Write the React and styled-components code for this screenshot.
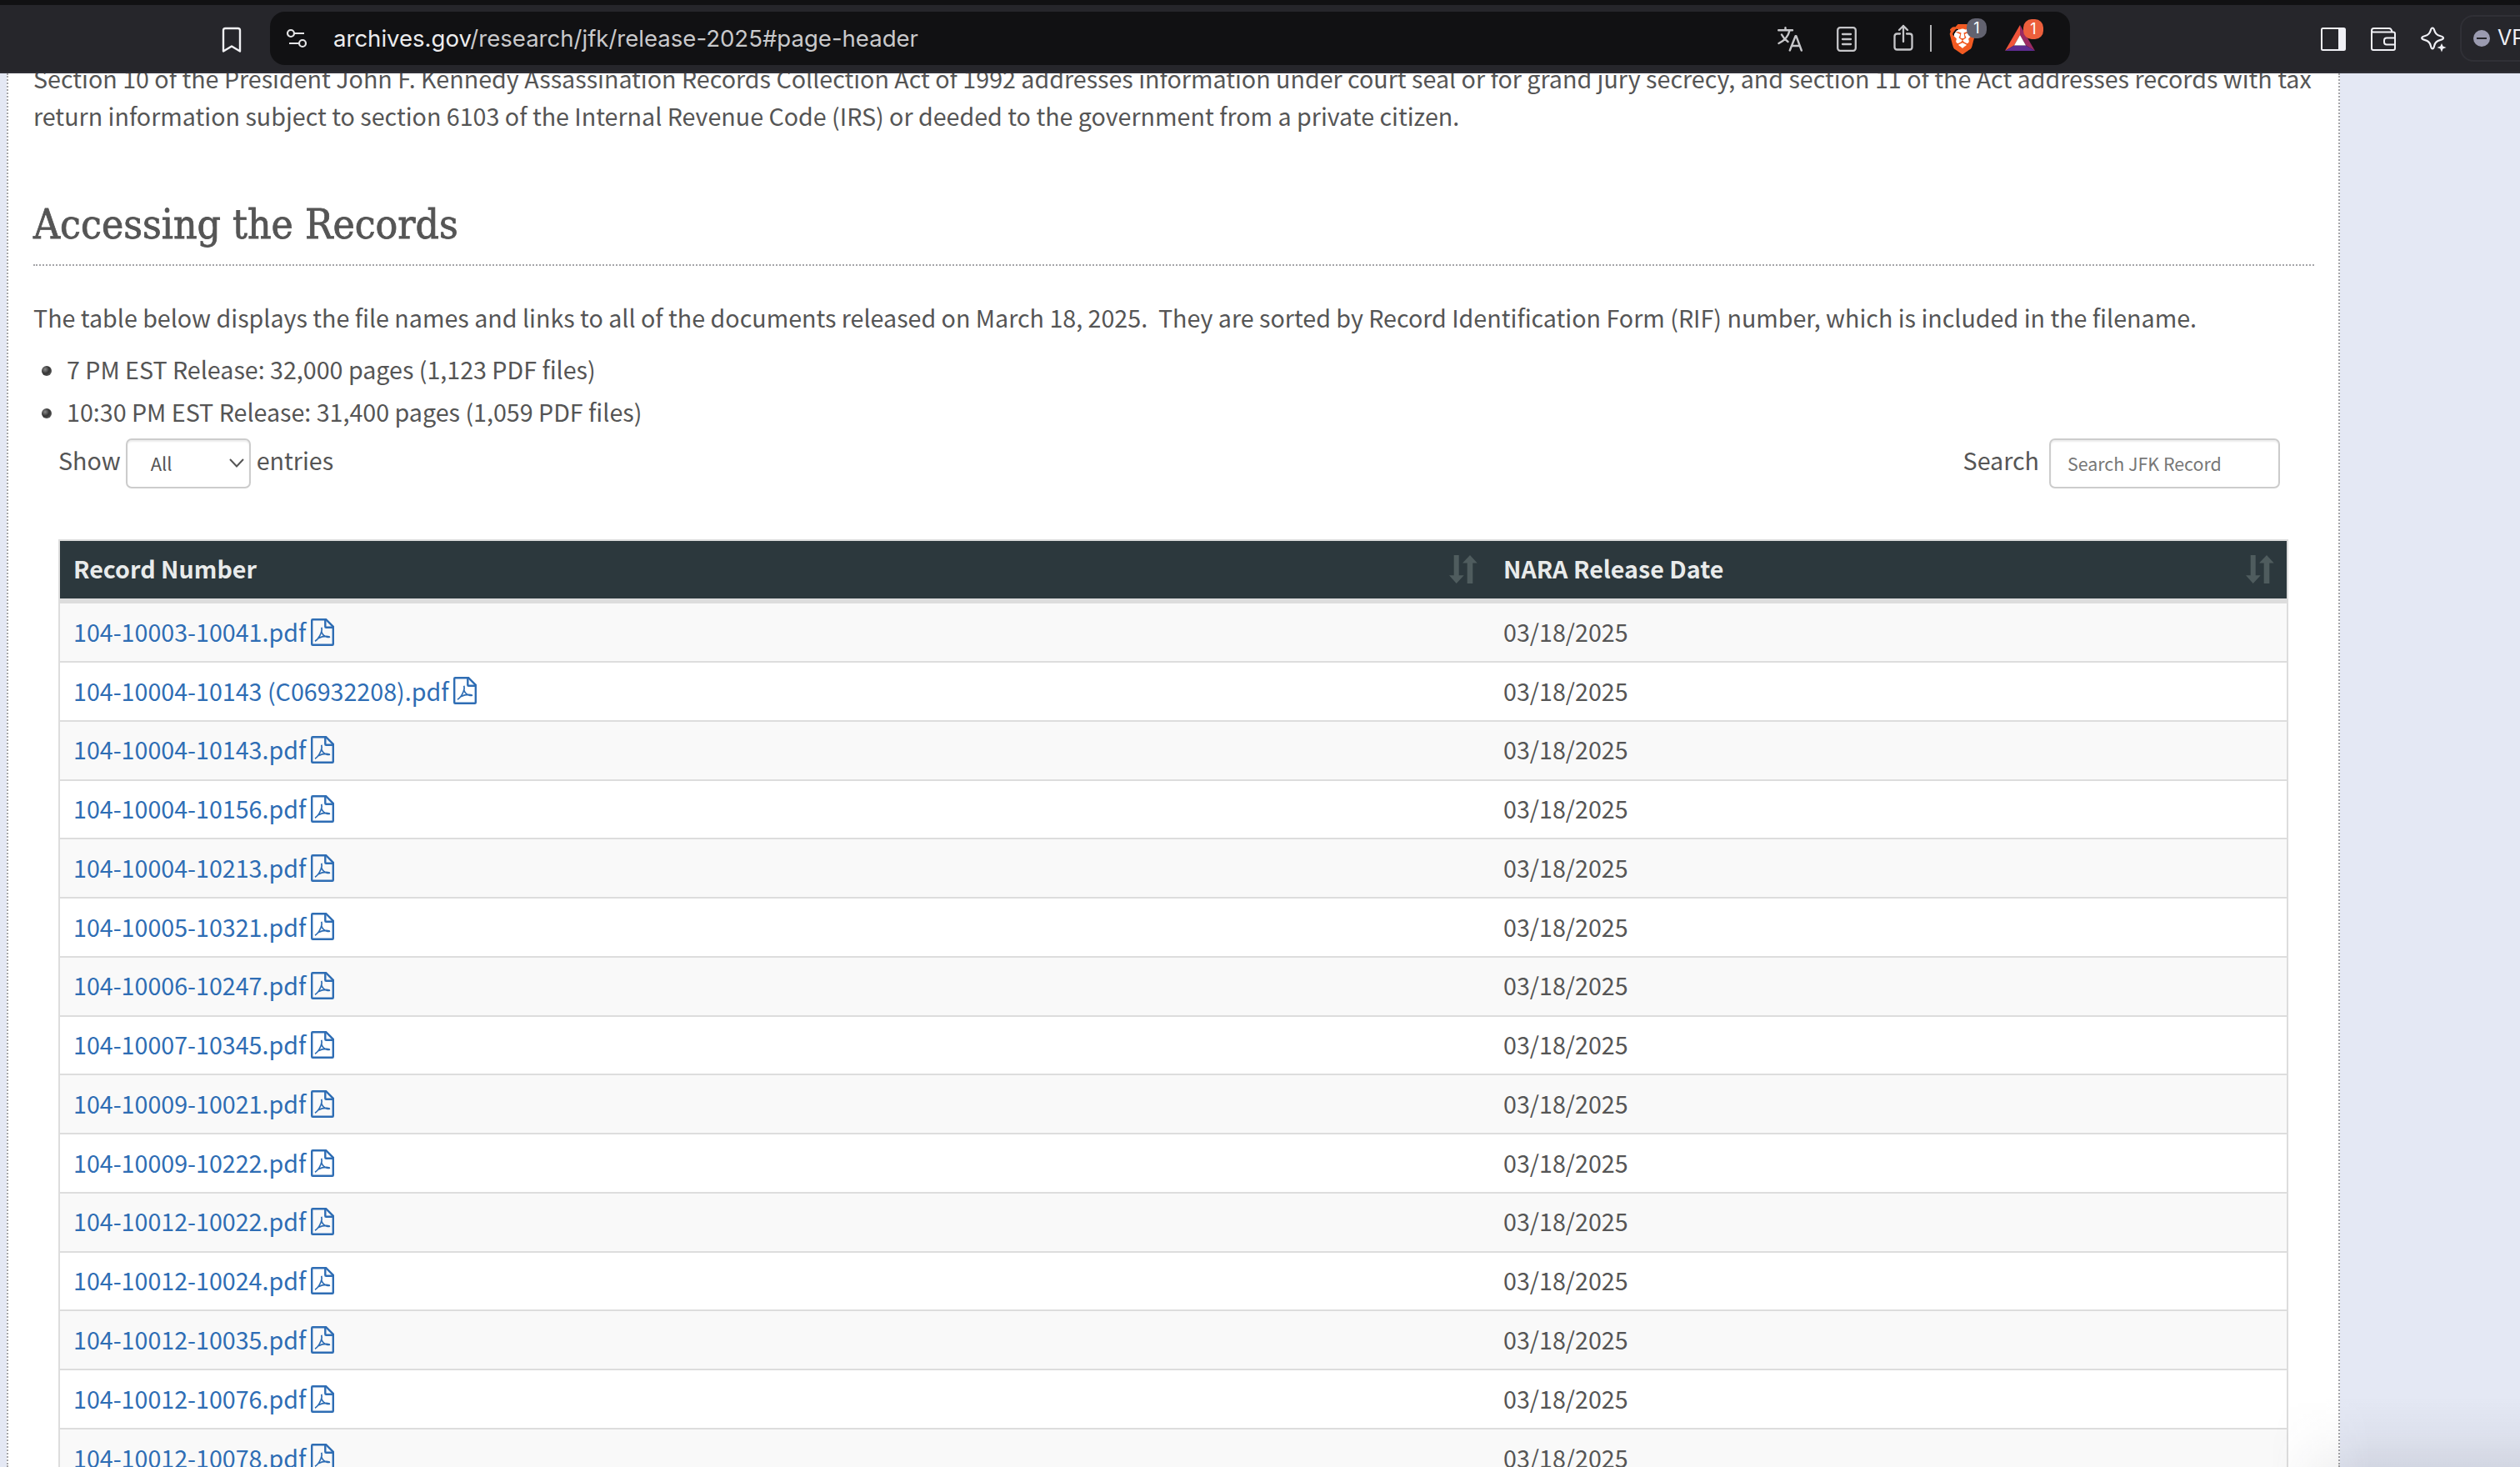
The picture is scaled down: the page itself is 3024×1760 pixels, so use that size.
import React from 'react';
import styled, { createGlobalStyle } from 'styled-components';
import { SiBrave } from 'react-icons/si';

const GlobalStyle = createGlobalStyle`
  * {
    box-sizing: border-box;
  }
  body {
    margin: 0;
    background: #e4e8f4;
    overflow: hidden;
  }
`;

const records = [
  '104-10003-10041.pdf',
  '104-10004-10143 (C06932208).pdf',
  '104-10004-10143.pdf',
  '104-10004-10156.pdf',
  '104-10004-10213.pdf',
  '104-10005-10321.pdf',
  '104-10006-10247.pdf',
  '104-10007-10345.pdf',
  '104-10009-10021.pdf',
  '104-10009-10222.pdf',
  '104-10012-10022.pdf',
  '104-10012-10024.pdf',
  '104-10012-10035.pdf',
  '104-10012-10076.pdf',
  '104-10012-10078.pdf',
];

function PdfIcon() {
  return (
    <svg width="28" height="33" viewBox="0 0 28 33" fill="none" stroke="currentColor" strokeWidth="2.4">
      <path d="M1.2 2.2q0-1 1-1H18.2L26.8 9.8V30.8q0 1-1 1H2.2q-1 0-1-1Z" />
      <path d="M17.3 1.5V9.7q0 1 1 1H26.6" />
      <path
        d="M5 27.2c3-1.6 5.6-5.7 7.2-9.7 1-2.6 1.2-5 .6-6.8M12.8 16c1 2.8 3.4 5.6 6.4 6.2 1.6.3 2.8.2 3.8-.3M9 23.6c4-1.8 9.6-2.6 13.8-1.6"
        strokeWidth="1.7"
      />
    </svg>
  );
}

function SortIcon() {
  return (
    <svg width="34" height="34" viewBox="0 0 34 34" fill="#4f5c5e">
      <path d="M5.7 0h6v24.3h6L8.7 34 0 24.3h5.7Z" />
      <path d="M25 0l8.7 9.5h-5.4V34h-6.6V9.5H16Z" />
    </svg>
  );
}

function BookmarkIcon() {
  return (
    <svg width="24" height="32" viewBox="0 0 24 32" fill="none" stroke="#f0f0f3" strokeWidth="2.4" strokeLinejoin="round">
      <path d="M2 4.5Q2 2 4.5 2h15Q22 2 22 4.5V29.5L12 23.5 2 29.5Z" />
    </svg>
  );
}

function TuneIcon() {
  return (
    <svg width="24" height="24" viewBox="0 0 24 24" fill="none" stroke="#e4e4e6" strokeWidth="2.2">
      <circle cx="5" cy="6" r="4" />
      <path d="M9 6h12M3 18h12" />
      <circle cx="19" cy="18" r="4" />
    </svg>
  );
}

function TranslateIcon() {
  return (
    <svg
      width="30"
      height="30"
      viewBox="0 0 30 30"
      fill="none"
      stroke="#c6c6c9"
      strokeWidth="2.4"
      strokeLinecap="round"
      strokeLinejoin="round"
    >
      <path d="M1.2 4.2H18M9.5 1.2v3M14.6 4.5C13 11 8 17 1.5 20M5 9.5C7 13.5 9.5 16 12.5 18" />
      <path d="M14.8 28.5 21.6 11.2h.8L28.8 28.5M17.2 23H26.5" />
    </svg>
  );
}

function ReaderIcon() {
  return (
    <svg width="24" height="30" viewBox="0 0 24 30" fill="none" stroke="#c6c6c9" strokeWidth="2.3" strokeLinecap="round">
      <rect x="1.2" y="1.2" width="21.6" height="27.6" rx="3" />
      <path d="M7 9h10M7 15h10M7 21h10" />
    </svg>
  );
}

function ShareIcon() {
  return (
    <svg
      width="24"
      height="32"
      viewBox="0 0 24 32"
      fill="none"
      stroke="#c6c6c9"
      strokeWidth="2.3"
      strokeLinecap="round"
      strokeLinejoin="round"
    >
      <path d="M8 11.5H4.5Q1.5 11.5 1.5 14.5V27.5Q1.5 30.5 4.5 30.5H19.5Q22.5 30.5 22.5 27.5V14.5Q22.5 11.5 19.5 11.5H16" />
      <path d="M12 21V2M7 7l5-5 5 5" />
    </svg>
  );
}

function BatIcon() {
  return (
    <svg width="36" height="31" viewBox="0 0 36 31">
      <path d="M18 0 0 31 11 24.5 18 12Z" fill="#f0543a" />
      <path d="M18 0 36 31 25 24.5 18 12Z" fill="#9b2a62" />
      <path d="M0 31h36l-11-6.5h-14Z" fill="#5f2c91" />
      <path d="M18 12 25 24.5H11Z" fill="#fff" />
    </svg>
  );
}

function SidebarIcon() {
  return (
    <svg width="30" height="28" viewBox="0 0 30 28">
      <rect x="1" y="1" width="28" height="26" rx="1.5" fill="none" stroke="#f0f0f5" strokeWidth="2" />
      <path d="M21 1h8v26h-8Z" fill="#f0f0f5" />
    </svg>
  );
}

function WalletIcon() {
  return (
    <svg width="30" height="28" viewBox="0 0 30 28" fill="none" stroke="#f0f0f5" strokeWidth="2" strokeLinejoin="round">
      <path d="M1 3.5V25q0 2 2 2H27q2 0 2-2V7.5q0-2-2-2H3q-2 0-2-2 0-2.5 2.5-2.5H22q2.500 0 3.500 4" />
      <path d="M29 12.5H19q-3 0-3 3v2q0 3 3 3H29" />
    </svg>
  );
}

function SparkleIcon() {
  return (
    <svg width="31" height="31" viewBox="0 0 31 31" fill="none" stroke="#f0f0f5" strokeWidth="2.2" strokeLinejoin="round">
      <path d="M14 1.5c1.5 0 1.8 1 2.3 3 1 4 2.5 5.5 6.5 6.5 2.5.6 4.2 1 4.2 2.5s-1.5 2-4 2.6c-4.2 1-5.7 2.6-6.7 6.4-.6 2.5-.9 4-2.3 4s-1.7-1.5-2.3-4c-1-3.8-2.5-5.4-6.5-6.400C2.700 15.500 1.200 15 1.200 13.500S2.700 11.600 5.200 11c4-1 5.500-2.500 6.500-6.500.500-2 .800-3 2.300-3Z" />
      <path d="M25 20l1.6 3.4L30.5 25l-3.9 1.6L25 30.5l-1.6-3.9L19.5 25l3.9-1.6Z" fill="#f0f0f5" stroke="none" />
    </svg>
  );
}

function App() {
  return (
    <Window>
      <GlobalStyle />
      <Toolbar>
        <BookmarkIcon />
        <AddressBar>
          <TuneIcon />
          <Url>
            archives.gov<span>/research/jfk/release-2025#page-header</span>
          </Url>
          <AddressActions>
            <TranslateIcon />
            <ReaderIcon />
            <ShareIcon />
            <Divider />
            <BadgeHolder $width={30}>
              <BraveLion size={36} />
              <Badge $color="#62626f" $right={-14}>
                1
              </Badge>
            </BadgeHolder>
            <BadgeHolder $width={36}>
              <BatIcon />
              <Badge $color="#ec5f3c" $right={-10}>
                1
              </Badge>
            </BadgeHolder>
          </AddressActions>
        </AddressBar>
        <BrowserActions>
          <SidebarIcon />
          <WalletIcon />
          <SparkleIcon />
        </BrowserActions>
        <VpnButton>
          <VpnDot />
          VPN
        </VpnButton>
      </Toolbar>
      <Page>
        <Paragraph>
          Section 10 of the President John F. Kennedy Assassination Records Collection Act of 1992 addresses information
          under court seal or for grand jury secrecy, and section 11 of the Act addresses records with tax
          <br />
          return information subject to section 6103 of the Internal Revenue Code (IRS) or deeded to the government from a
          private citizen.
        </Paragraph>
        <Heading>Accessing the Records</Heading>
        <Intro>
          The table below displays the file names and links to all of the documents released on March 18, 2025.&nbsp; They
          are sorted by Record Identification Form (RIF) number, which is included in the filename.
        </Intro>
        <ReleaseList>
          <li>7 PM EST Release: 32,000 pages (1,123 PDF files)</li>
          <li>10:30 PM EST Release: 31,400 pages (1,059 PDF files)</li>
        </ReleaseList>
        <Controls>
          <Label>Show</Label>
          <Select>
            All
            <svg width="18" height="11" viewBox="0 0 18 11" fill="none" stroke="#555" strokeWidth="2">
              <path d="M1 1l8 8.5L17 1" />
            </svg>
          </Select>
          <Label>entries</Label>
          <SearchLabel>Search</SearchLabel>
          <SearchInput placeholder="Search JFK Record" />
        </Controls>
        <Table>
          <HeaderRow>
            <HeaderCell>
              Record Number
              <SortIcon />
            </HeaderCell>
            <HeaderCell>
              NARA Release Date
              <SortIcon />
            </HeaderCell>
          </HeaderRow>
          {records.map((name) => (
            <Row key={name}>
              <FileLink>
                {name}
                <PdfIcon />
              </FileLink>
              <span>03/18/2025</span>
            </Row>
          ))}
        </Table>
      </Page>
      <CornerShadow />
    </Window>
  );
}

export default App;

const Window = styled.div`
  position: relative;
  width: 3024px;
  height: 1760px;
  overflow: hidden;
  background: #e4e8f4;
  color: #555;
  font-family: 'Noto Sans CJK JP', 'Noto Sans', sans-serif;
  font-size: 28.65px;
  line-height: 45.7px;
  svg {
    display: block;
    flex-shrink: 0;
  }
`;

const Toolbar = styled.header`
  display: flex;
  align-items: center;
  height: 88px;
  padding: 4px 0 0 266px;
  background: #26262b;
  border-top: 6px solid #111113;
  border-bottom: 2px solid #2f2f36;
  overflow: hidden;
  font-family: Inter, sans-serif;
`;

const AddressBar = styled.div`
  display: flex;
  align-items: center;
  flex-shrink: 0;
  width: 2160px;
  height: 64px;
  margin: -4px 0 0 34px;
  padding: 0 42px 0 20px;
  border-radius: 18px;
  background: #111113;
`;

const Url = styled.div`
  margin: 2px 0 0 32px;
  color: #ececee;
  font-size: 27.55px;
  white-space: nowrap;
  span {
    color: #c9c9cb;
  }
`;

const AddressActions = styled.div`
  display: flex;
  align-items: center;
  margin: 1px 0 0 auto;
  svg:nth-child(2) {
    margin-left: 41px;
  }
  svg:nth-child(3) {
    margin: -4px 0 0 44px;
  }
`;

const Divider = styled.div`
  width: 2px;
  height: 32px;
  margin: -2px 22px 0 20px;
  background: #b4b4b6;
`;

const BadgeHolder = styled.div`
  position: relative;
  display: flex;
  justify-content: center;
  width: ${({ $width }) => $width}px;
  color: #f15a22;
  & + & {
    margin: -2px 0 0 36px;
  }
`;

/* the lion's face is a hole in the glyph, so the white comes from behind */
const BraveLion = styled(SiBrave)`
  background: radial-gradient(ellipse 11px 12px at 50% 47%, #fff 97%, transparent 100%);
`;

const Badge = styled.span`
  position: absolute;
  top: -7px;
  right: ${({ $right }) => $right}px;
  width: 24px;
  height: 24px;
  border-radius: 10px;
  background: ${({ $color }) => $color};
  color: #fff;
  font-size: 18px;
  line-height: 24px;
  text-align: center;
`;

const BrowserActions = styled.div`
  display: flex;
  align-items: center;
  gap: 30px;
  flex-shrink: 0;
  margin: -2px 0 0 301px;
`;

const VpnButton = styled.div`
  display: flex;
  align-items: center;
  flex-shrink: 0;
  width: 120px;
  height: 56px;
  margin: -4px 0 0 16px;
  padding-left: 14px;
  border: 2px solid #303036;
  border-radius: 16px;
  color: #f0f0f5;
  font-size: 25px;
`;

const VpnDot = styled.span`
  display: flex;
  align-items: center;
  justify-content: center;
  width: 20px;
  height: 20px;
  margin-right: 9px;
  border-radius: 50%;
  background: #9b9bb0;
  &::after {
    content: '';
    width: 12px;
    height: 2px;
    background: #26262b;
  }
`;

const Page = styled.main`
  width: 2800px;
  height: 1672px;
  margin-left: 8px;
  padding: 0 29px 0 30px;
  background: #fff;
  border: 2px dotted #a5a5a8;
  border-width: 0 2px;
  overflow: hidden;
`;

const Paragraph = styled.p`
  margin: -17.5px 0 0;
  white-space: nowrap;
`;

const Heading = styled.h2`
  display: flex;
  align-items: flex-end;
  height: 157px;
  margin: 0;
  padding-bottom: 18px;
  border-bottom: 2px dotted #a5a5a8;
  font-family: 'DejaVu Serif Condensed', 'DejaVu Serif', serif;
  font-size: 49.4px;
  font-weight: 400;
  line-height: 60px;
  white-space: nowrap;
  -webkit-text-stroke: 0.8px #555;
`;

const Intro = styled.p`
  margin: 38.6px 0 0;
  white-space: nowrap;
`;

const ReleaseList = styled.ul`
  height: 106px;
  margin: 16.7px 0 0;
  padding: 0 0 0 10px;
  list-style: none;
  li {
    display: flex;
    align-items: center;
    margin-bottom: 5.3px;
  }
  li::before {
    content: '';
    width: 12px;
    height: 12px;
    margin: 4px 18px 0 0;
    border-radius: 50%;
    background: radial-gradient(circle at 35% 35%, #8a8a8a 0%, #333 45%, #777 100%);
  }
`;

const Controls = styled.div`
  display: flex;
  align-items: center;
  height: 60px;
  padding: 0 41px 0 30px;
`;

const Label = styled.span`
  margin-bottom: 8px;
`;

const SearchLabel = styled(Label)`
  margin-left: auto;
`;

const Select = styled.div`
  display: flex;
  align-items: center;
  justify-content: space-between;
  width: 150px;
  height: 60px;
  margin: 0 7px 0 6px;
  padding: 0 6px 0 28px;
  border: 2px solid #ccc;
  border-radius: 7px;
  box-shadow: inset 0 2px 2px rgba(0, 0, 0, 0.075);
  font-size: 22px;
`;

const SearchInput = styled.input`
  width: 277px;
  height: 60px;
  margin-left: 12px;
  padding: 0 20px 1px;
  border: 2px solid #ccc;
  border-radius: 7px;
  box-shadow: inset 0 2px 2px rgba(0, 0, 0, 0.075);
  font-family: inherit;
  font-size: 21.4px;
  &::placeholder {
    color: #777;
  }
`;

const Table = styled.div`
  width: 2676px;
  margin: 61.4px 0 0 30px;
  border: 2px solid #ddd;
`;

const Row = styled.div`
  display: grid;
  grid-template-columns: 1716px 1fr;
  align-items: center;
  height: 70.77px;
  padding: 0 16px 2px;
  border-bottom: 2px solid #ddd;
  background: #fff;
  &:nth-child(even) {
    background: #f9f9f9;
  }
`;

const HeaderRow = styled(Row)`
  height: 75px;
  padding-bottom: 4px;
  border-bottom-width: 6px;
  background: #2c383d;
  color: #e9ebeb;
  font-weight: 700;
`;

const HeaderCell = styled.div`
  display: flex;
  align-items: center;
  justify-content: space-between;
  padding-right: 31px;
  svg {
    margin-top: 2px;
  }
  &:last-child {
    margin-right: -1px;
    padding-right: 0;
  }
`;

const FileLink = styled.a`
  display: flex;
  align-items: center;
  color: #2e6db4;
  svg {
    margin: 1px 0 0 5.5px;
  }
`;

const CornerShadow = styled.div`
  position: absolute;
  right: 0;
  bottom: 0;
  width: 300px;
  height: 84px;
  background: linear-gradient(
    to bottom,
    rgba(60, 60, 70, 0),
    rgba(60, 60, 70, 0.035) 50%,
    rgba(60, 60, 70, 0.1)
  );
  mask-image: linear-gradient(to right, transparent, rgba(0, 0, 0, 0.6) 80px, #000 120px);
`;
